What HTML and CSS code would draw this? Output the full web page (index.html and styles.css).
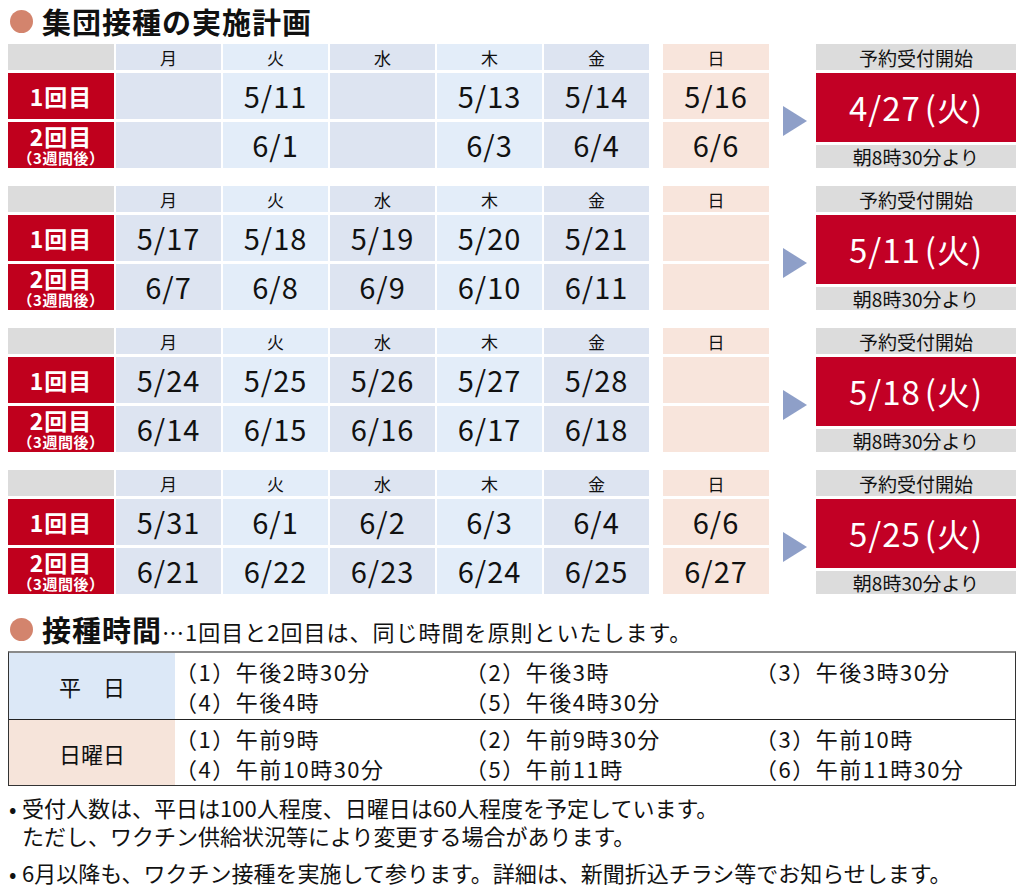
FILE: index.html
```html
<!DOCTYPE html>
<html lang="ja">
<head>
<meta charset="utf-8">
<title>集団接種の実施計画</title>
<link rel="stylesheet" href="styles.css">
</head>
<body>
<div class="page">
  <h1 class="heading"><span class="dot"></span><span class="h-main">集団接種の実施計画</span></h1>

  <section class="block">
    <div class="grid">
      <div class="corner"></div>
      <div class="wd odd">月</div><div class="wd even">火</div><div class="wd odd">水</div><div class="wd even">木</div><div class="wd odd">金</div>
      <div class="lbl"><span class="lbl-main">1回目</span></div>
      <div class="cell odd"></div><div class="cell even">5/11</div><div class="cell odd"></div><div class="cell even">5/13</div><div class="cell odd">5/14</div>
      <div class="lbl"><span class="lbl-main">2回目</span><span class="lbl-sub">（3週間後）</span></div>
      <div class="cell odd"></div><div class="cell even">6/1</div><div class="cell odd"></div><div class="cell even">6/3</div><div class="cell odd">6/4</div>
    </div>
    <div class="sun">
      <div class="wd">日</div><div class="cell">5/16</div><div class="cell">6/6</div>
    </div>
    <div class="arrow-wrap"><span class="arrow"></span></div>
    <div class="start">
      <div class="start-top">予約受付開始</div>
      <div class="start-date">4/27<span class="paren">(火)</span></div>
      <div class="start-bot">朝8時30分より</div>
    </div>
  </section>

  <section class="block">
    <div class="grid">
      <div class="corner"></div>
      <div class="wd odd">月</div><div class="wd even">火</div><div class="wd odd">水</div><div class="wd even">木</div><div class="wd odd">金</div>
      <div class="lbl"><span class="lbl-main">1回目</span></div>
      <div class="cell odd">5/17</div><div class="cell even">5/18</div><div class="cell odd">5/19</div><div class="cell even">5/20</div><div class="cell odd">5/21</div>
      <div class="lbl"><span class="lbl-main">2回目</span><span class="lbl-sub">（3週間後）</span></div>
      <div class="cell odd">6/7</div><div class="cell even">6/8</div><div class="cell odd">6/9</div><div class="cell even">6/10</div><div class="cell odd">6/11</div>
    </div>
    <div class="sun">
      <div class="wd">日</div><div class="cell"></div><div class="cell"></div>
    </div>
    <div class="arrow-wrap"><span class="arrow"></span></div>
    <div class="start">
      <div class="start-top">予約受付開始</div>
      <div class="start-date">5/11<span class="paren">(火)</span></div>
      <div class="start-bot">朝8時30分より</div>
    </div>
  </section>

  <section class="block">
    <div class="grid">
      <div class="corner"></div>
      <div class="wd odd">月</div><div class="wd even">火</div><div class="wd odd">水</div><div class="wd even">木</div><div class="wd odd">金</div>
      <div class="lbl"><span class="lbl-main">1回目</span></div>
      <div class="cell odd">5/24</div><div class="cell even">5/25</div><div class="cell odd">5/26</div><div class="cell even">5/27</div><div class="cell odd">5/28</div>
      <div class="lbl"><span class="lbl-main">2回目</span><span class="lbl-sub">（3週間後）</span></div>
      <div class="cell odd">6/14</div><div class="cell even">6/15</div><div class="cell odd">6/16</div><div class="cell even">6/17</div><div class="cell odd">6/18</div>
    </div>
    <div class="sun">
      <div class="wd">日</div><div class="cell"></div><div class="cell"></div>
    </div>
    <div class="arrow-wrap"><span class="arrow"></span></div>
    <div class="start">
      <div class="start-top">予約受付開始</div>
      <div class="start-date">5/18<span class="paren">(火)</span></div>
      <div class="start-bot">朝8時30分より</div>
    </div>
  </section>

  <section class="block">
    <div class="grid">
      <div class="corner"></div>
      <div class="wd odd">月</div><div class="wd even">火</div><div class="wd odd">水</div><div class="wd even">木</div><div class="wd odd">金</div>
      <div class="lbl"><span class="lbl-main">1回目</span></div>
      <div class="cell odd">5/31</div><div class="cell even">6/1</div><div class="cell odd">6/2</div><div class="cell even">6/3</div><div class="cell odd">6/4</div>
      <div class="lbl"><span class="lbl-main">2回目</span><span class="lbl-sub">（3週間後）</span></div>
      <div class="cell odd">6/21</div><div class="cell even">6/22</div><div class="cell odd">6/23</div><div class="cell even">6/24</div><div class="cell odd">6/25</div>
    </div>
    <div class="sun">
      <div class="wd">日</div><div class="cell">6/6</div><div class="cell">6/27</div>
    </div>
    <div class="arrow-wrap"><span class="arrow"></span></div>
    <div class="start">
      <div class="start-top">予約受付開始</div>
      <div class="start-date">5/25<span class="paren">(火)</span></div>
      <div class="start-bot">朝8時30分より</div>
    </div>
  </section>

  <h2 class="heading heading2"><span class="dot"></span><span class="h-main">接種時間</span><span class="h-note">…1回目と2回目は、同じ時間を原則といたします。</span></h2>

  <div class="times">
    <div class="times-row">
      <div class="times-head weekday">平　日</div>
      <div class="times-body">
        <span>（1）午後2時30分</span><span>（2）午後3時</span><span>（3）午後3時30分</span>
        <span>（4）午後4時</span><span>（5）午後4時30分</span><span></span>
      </div>
    </div>
    <div class="times-row">
      <div class="times-head sunday">日曜日</div>
      <div class="times-body">
        <span>（1）午前9時</span><span>（2）午前9時30分</span><span>（3）午前10時</span>
        <span>（4）午前10時30分</span><span>（5）午前11時</span><span>（6）午前11時30分</span>
      </div>
    </div>
  </div>

  <ul class="notes">
    <li>受付人数は、平日は100人程度、日曜日は60人程度を予定しています。<br>ただし、ワクチン供給状況等により変更する場合があります。</li>
    <li>6月以降も、ワクチン接種を実施して参ります。詳細は、新聞折込チラシ等でお知らせします。</li>
  </ul>
</div>
</body>
</html>
```

FILE: styles.css
```css
* { box-sizing: border-box; }

body {
  margin: 0;
  background: #ffffff;
  color: #111111;
  font-family: "Noto Sans CJK JP", "Noto Sans", sans-serif;
}

.page {
  width: 1029px;
  padding: 4px 12px 0 8px;
}

.heading {
  display: flex;
  align-items: center;
  height: 34px;
  margin: 0 0 6px 0;
  font-weight: 700;
}

.dot {
  width: 23px;
  height: 23px;
  border-radius: 50%;
  background: #d3846d;
  margin: 0 9px 0 2px;
  flex: none;
}

.h-main {
  font-size: 29px;
  line-height: 34px;
  letter-spacing: 1px;
  color: #111;
}

.h-note {
  font-size: 22px;
  font-weight: 400;
  line-height: 34px;
  letter-spacing: 1px;
  margin-top: 3px;
}

.heading2 {
  margin-top: 17px;
  margin-bottom: 5px;
}

/* schedule blocks */
.block {
  display: flex;
  align-items: stretch;
  height: 124px;
  margin-bottom: 18px;
}

.grid {
  display: grid;
  grid-template-columns: 106px repeat(5, 105px);
  grid-template-rows: 26px 46px 46px;
  column-gap: 2px;
  row-gap: 3px;
}

.corner { background: #dcdcdc; }

.wd {
  display: flex;
  align-items: center;
  justify-content: center;
  font-size: 17px;
  line-height: 1;
  color: #111;
}

.odd { background: #dde4f1; }
.even { background: #e3edf9; }

.cell {
  display: flex;
  align-items: center;
  justify-content: center;
  padding-bottom: 2px;
  font-size: 29px;
  line-height: 1;
  letter-spacing: 1px;
  color: #111;
}

.lbl {
  display: flex;
  flex-direction: column;
  align-items: center;
  justify-content: center;
  background: #c0001d;
  color: #ffffff;
  font-weight: 700;
}

.lbl-main {
  font-size: 23px;
  line-height: 23px;
  letter-spacing: 1px;
}

.lbl-sub {
  font-size: 15px;
  line-height: 17px;
  letter-spacing: 0.5px;
  margin-top: 1px;
}

.sun {
  display: grid;
  grid-template-columns: 106px;
  grid-template-rows: 26px 46px 46px;
  row-gap: 3px;
  margin-left: 14px;
  background: #ffffff;
}

.sun .wd,
.sun .cell { background: #f8e5dc; }

.arrow-wrap {
  width: 24px;
  margin: 0 9px 0 14px;
  padding-top: 29px;
  display: flex;
  align-items: center;
}

.arrow {
  width: 0;
  height: 0;
  border-top: 15px solid transparent;
  border-bottom: 15px solid transparent;
  border-left: 24px solid #8e9fc8;
}

.start {
  width: 200px;
  display: flex;
  flex-direction: column;
  gap: 3px;
}

.start-top,
.start-bot {
  background: #dcdcdc;
  display: flex;
  align-items: center;
  justify-content: center;
  font-size: 19px;
  line-height: 1;
  color: #111;
}

.start-top { height: 26px; }
.start-bot { height: 23px; }

.start-date {
  height: 69px;
  background: #c20025;
  color: #ffffff;
  display: flex;
  align-items: center;
  justify-content: center;
  font-size: 33px;
  line-height: 1;
  letter-spacing: 1px;
}

.paren {
  margin-left: 4px;
}

/* times table */
.times {
  width: 1008px;
  border: 1px solid #333;
  border-top: 2px solid #8a8a8a;
}

.times-row {
  display: flex;
  height: 66px;
}

.times-row + .times-row {
  border-top: 1px solid #222;
}

.times-head {
  width: 166px;
  display: flex;
  align-items: center;
  justify-content: center;
  font-size: 22px;
  color: #111;
}

.weekday { background: #dce8f7; }
.sunday { background: #f6e4da; }

.times-body {
  flex: 1;
  display: grid;
  grid-template-columns: 290px 290px auto;
  align-content: center;
  padding-left: 0;
  font-size: 22px;
  line-height: 30px;
  letter-spacing: 1.5px;
  color: #111;
}

/* notes */
.notes {
  list-style: none;
  margin: 7px 0 0 0;
  padding: 0;
  font-size: 22px;
  line-height: 28px;
  color: #111;
}

.notes li {
  position: relative;
  padding-left: 14px;
  margin-bottom: 9px;
}

.notes li::before {
  content: "•";
  position: absolute;
  left: 1px;
  top: 0;
}
```
